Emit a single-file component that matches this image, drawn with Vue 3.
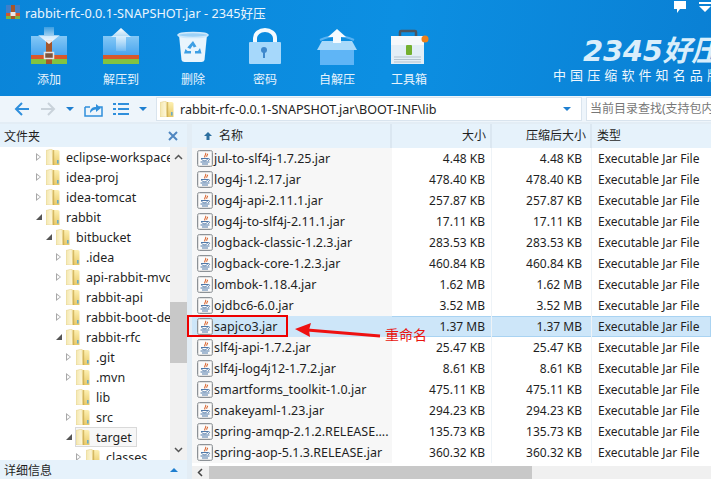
<script setup>
const tools = [
  { label: '添加', kind: 'add' },
  { label: '解压到', kind: 'extract' },
  { label: '删除', kind: 'bin' },
  { label: '密码', kind: 'lock' },
  { label: '自解压', kind: 'box' },
  { label: '工具箱', kind: 'kit' }
]
const tree = [
  { name: 'eclipse-workspace', lvl: 0, ex: 'c' },
  { name: 'idea-proj', lvl: 0, ex: 'c' },
  { name: 'idea-tomcat', lvl: 0, ex: 'c' },
  { name: 'rabbit', lvl: 0, ex: 'o' },
  { name: 'bitbucket', lvl: 1, ex: 'o' },
  { name: '.idea', lvl: 2, ex: 'c' },
  { name: 'api-rabbit-mvc', lvl: 2, ex: 'c' },
  { name: 'rabbit-api', lvl: 2, ex: 'c' },
  { name: 'rabbit-boot-demo', lvl: 2, ex: 'c' },
  { name: 'rabbit-rfc', lvl: 2, ex: 'o' },
  { name: '.git', lvl: 3, ex: 'c' },
  { name: '.mvn', lvl: 3, ex: 'c' },
  { name: 'lib', lvl: 3, ex: '' },
  { name: 'src', lvl: 3, ex: 'c' },
  { name: 'target', lvl: 3, ex: 'o', sel: true },
  { name: 'classes', lvl: 4, ex: 'c' }
]
const files = [
  ['jul-to-slf4j-1.7.25.jar', '4.48 KB', '4.48 KB'],
  ['log4j-1.2.17.jar', '478.40 KB', '478.40 KB'],
  ['log4j-api-2.11.1.jar', '257.87 KB', '257.87 KB'],
  ['log4j-to-slf4j-2.11.1.jar', '17.11 KB', '17.11 KB'],
  ['logback-classic-1.2.3.jar', '283.53 KB', '283.53 KB'],
  ['logback-core-1.2.3.jar', '460.84 KB', '460.84 KB'],
  ['lombok-1.18.4.jar', '1.62 MB', '1.62 MB'],
  ['ojdbc6-6.0.jar', '3.52 MB', '3.52 MB'],
  ['sapjco3.jar', '1.37 MB', '1.37 MB'],
  ['slf4j-api-1.7.2.jar', '25.47 KB', '25.47 KB'],
  ['slf4j-log4j12-1.7.2.jar', '8.61 KB', '8.61 KB'],
  ['smartforms_toolkit-1.0.jar', '475.11 KB', '475.11 KB'],
  ['snakeyaml-1.23.jar', '294.23 KB', '294.23 KB'],
  ['spring-amqp-2.1.2.RELEASE....', '135.73 KB', '135.73 KB'],
  ['spring-aop-5.1.3.RELEASE.jar', '360.32 KB', '360.32 KB']
]
</script>

<template>
  <div class="win">
    <svg width="0" height="0" class="defs">
      <defs>
        <linearGradient id="fg" x1="0" y1="0" x2="0" y2="1">
          <stop offset="0" stop-color="#fdf0b2" />
          <stop offset="1" stop-color="#e8c968" />
        </linearGradient>
        <linearGradient id="fl" x1="0" y1="0" x2="1" y2="0">
          <stop offset="0" stop-color="#f3e6ae" />
          <stop offset="1" stop-color="#fff9df" />
        </linearGradient>
        <linearGradient id="boxg" x1="0" y1="0" x2="0" y2="1">
          <stop offset="0" stop-color="#84c8f6" />
          <stop offset="1" stop-color="#4aa5ee" />
        </linearGradient>
        <linearGradient id="arw" x1="0" y1="0" x2="0" y2="1">
          <stop offset="0" stop-color="#ffffff" />
          <stop offset="1" stop-color="#ffffff" stop-opacity=".15" />
        </linearGradient>
        <linearGradient id="arwd" x1="0" y1="0" x2="0" y2="1">
          <stop offset="0" stop-color="#ffffff" stop-opacity=".2" />
          <stop offset="1" stop-color="#ffffff" />
        </linearGradient>
        <symbol id="fld" viewBox="0 0 14 16">
          <path d="M6 1h6l1.500 1v14H6z" fill="url(#fg)" />
          <path d="M0 1.500L6 0l.8 16H0z" fill="url(#fl)" stroke="#e2cd85" stroke-width=".5" />
          <path d="M6.800 1h1.400v15H6.800z" fill="#c9a94f" opacity=".75" />
          <rect x="11.200" y="11" width="1.300" height="3.500" fill="#4da3d8" />
        </symbol>
        <symbol id="jar" viewBox="0 0 16 17">
          <rect x=".5" y=".5" width="15" height="16" rx="2" fill="#f1f1f1" stroke="#8d9297" />
          <rect x="1.500" y="1.500" width="13" height="14" rx="1" fill="#fbfbfb" stroke="#d4d4d4" stroke-width=".6" />
          <path d="M8.500 3c1.500 1.500-2 2.500-.5 4.500M10.500 3.800c.6 1-1.300 1.500-.7 3" fill="none" stroke="#d9622b" stroke-width="1.100" />
          <path d="M4 8.500h7.500c1.500 0 1.500 1.800-.5 2M4.500 8.500c0 1.500 1.500 2.300 3 2.300s3-.8 3-2.300" fill="none" stroke="#4f78a8" stroke-width="1" />
          <path d="M3.500 12h9M5 14h6" stroke="#4f78a8" stroke-width="1" />
        </symbol>
      </defs>
    </svg>

    <header class="top">
      <div class="title">
        <svg width="16" height="16" viewBox="0 0 16 16">
          <path d="M1 1h14v8H1z" fill="#3f7fc9" />
          <path d="M1 9h14v3H1z" fill="#d4562b" />
          <path d="M1 12h14v3H1z" fill="#7cb342" />
          <path d="M6 1h4v14H6z" fill="#a5562a" />
          <rect x="5.500" y="8" width="5" height="4" fill="#e8e8e8" />
        </svg>
        <span>rabbit-rfc-0.0.1-SNAPSHOT.jar - 2345好压</span>
      </div>
      <div class="toolrow">
        <div v-for="t in tools" :key="t.kind" class="tool">
          <svg width="40" height="40" viewBox="0 0 40 40">
            <template v-if="t.kind === 'add'">
              <path d="M2 10h36v19H2z" fill="url(#boxg)" />
              <path d="M2 29h36v4H2z" fill="#d9582a" />
              <path d="M2 33h36v5H2z" fill="#82c341" />
              <path d="M17 14h6v24h-6z" fill="#a5562a" />
              <path d="M15 1h10v8h6L20 18 9 9h6z" fill="url(#arwd)" />
              <rect x="15.500" y="26.500" width="9" height="6" fill="#7b5540" stroke="#e6e6e6" stroke-width="1.500" />
            </template>
            <template v-else-if="t.kind === 'extract'">
              <path d="M2 10h36v19H2z" fill="url(#boxg)" />
              <path d="M2 29h36v4H2z" fill="#d9582a" />
              <path d="M2 33h36v5H2z" fill="#82c341" />
              <path d="M20 2l10 9h-5v14H15V11h-5z" fill="url(#arw)" />
            </template>
            <template v-else-if="t.kind === 'bin'">
              <path d="M6 9h28l-2.500 25q-.5 2-3 2h-17q-2.500 0-3-2z" fill="#e9f5fd" />
              <ellipse cx="20" cy="9" rx="15" ry="2.600" fill="#9dd2f7" stroke="#cfe9fb" stroke-width="1.500" />
              <path d="M20 15l3.500 5.500-2.800 1-1-2-2.400 3.500-3-1.500zM27 22l1.500 5.500H22V25h3zM12.500 23l-1.500 4.500h7V25h-3.500z" fill="#3e9fe4" />
            </template>
            <template v-else-if="t.kind === 'lock'">
              <path d="M10 17v-5a10 8 0 0 1 20 0v5" fill="none" stroke="#f4fafe" stroke-width="4" />
              <rect x="4" y="16" width="32" height="22" rx="1" fill="#a6d8fb" />
              <circle cx="19" cy="24" r="3" fill="#3f88cc" />
              <rect x="18" y="25" width="2" height="7" fill="#3f88cc" />
            </template>
            <template v-else-if="t.kind === 'box'">
              <path d="M3 14q17-8 34 0" fill="none" stroke="#58b2f2" stroke-width="2" />
              <path d="M3 24h34v15H3z" fill="#5fb5f6" />
              <path d="M5 15h30l5 9H0z" fill="#a8d9fa" />
              <path d="M20 3l9 8h-5v6h-8v-6h-5z" fill="#f5fbff" />
            </template>
            <template v-else>
              <path d="M11 10V6q0-1 1-1h14q1 0 1 1v4" fill="none" stroke="#4a5560" stroke-width="2.500" />
              <path d="M2 10h33v28H2z" fill="#e3eef6" />
              <path d="M2 10h33v9H2z" fill="#f5f8fb" />
              <path d="M5 31h27M5 33.500h27M5 36h27" stroke="#b3c3cf" stroke-width="1" />
              <rect x="17" y="19" width="6" height="10" rx="1" fill="#74b030" />
              <circle cx="36" cy="13" r="3.500" fill="#f08019" />
            </template>
          </svg>
          <span>{{ t.label }}</span>
        </div>
      </div>
      <div class="brand">
        <div class="winicons">
          <svg width="14" height="14" viewBox="0 0 14 14"><path d="M1 1h12v8H7l-3 4V9H1z" fill="#fff" /></svg>
          <svg width="14" height="14" viewBox="0 0 14 14"><path d="M1 2h12v2H1zM1 6h12l-6 6z" fill="#fff" /></svg>
        </div>
        <div class="logo">2345好压</div>
        <div class="slogan">中国压缩软件知名品牌</div>
      </div>
    </header>

    <div class="addr">
      <div class="nav">
        <svg width="16" height="16" viewBox="0 0 16 16"><path d="M15 8H2M8 2L2 8l6 6" fill="none" stroke="#2f8fdc" stroke-width="2" /></svg>
        <svg width="16" height="16" viewBox="0 0 16 16"><path d="M1 8h13M8 2l6 6-6 6" fill="none" stroke="#c9d2da" stroke-width="2" /></svg>
        <i class="caret"></i>
        <svg width="19" height="16" viewBox="0 0 19 16"><path d="M1 6h5M1 6v9h17V6h-3" fill="none" stroke="#2f8fdc" stroke-width="1.500" /><path d="M6 12c0-5 3-6 6-6V3l5 4-5 4V8.500c-2 0-4 1-6 3.500z" fill="#2f8fdc" /></svg>
        <svg width="16" height="14" viewBox="0 0 16 14"><path d="M0 2h3M5 2h11M0 7h3M5 7h11M0 12h3M5 12h11" stroke="#2f8fdc" stroke-width="2" /></svg>
        <i class="caret"></i>
      </div>
      <div class="path">
        <svg class="folder" width="14" height="16" viewBox="0 0 14 16"><use href="#fld" /></svg>
        <span class="ptext">rabbit-rfc-0.0.1-SNAPSHOT.jar\BOOT-INF\lib</span>
        <i class="caret pcaret"></i>
      </div>
      <div class="search">当前目录查找(支持包内查找)</div>
    </div>

    <div class="main">
      <aside class="side">
        <div class="shead">
          <span>文件夹</span>
          <svg width="10" height="10" viewBox="0 0 10 10"><path d="M1 1l8 8M9 1l-8 8" stroke="#4f86c0" stroke-width="2" /></svg>
        </div>
        <div class="treewrap">
          <div class="tree">
            <div v-for="n in tree" :key="n.name" class="tnode" :class="'lvl' + n.lvl">
              <i class="exp" :class="n.ex"></i>
              <div class="tlabel" :class="{ tsel: n.sel }">
                <svg class="folder" width="14" height="16" viewBox="0 0 14 16"><use href="#fld" /></svg>
                <span>{{ n.name }}</span>
              </div>
            </div>
          </div>
          <div class="vbar">
            <svg width="9" height="6" viewBox="0 0 9 6"><path d="M1 5l3.500-3.500L8 5" fill="none" stroke="#555" stroke-width="1.500" /></svg>
            <div class="vtrack"><div class="vthumb"></div></div>
            <svg width="9" height="6" viewBox="0 0 9 6"><path d="M1 1l3.500 3.500L8 1" fill="none" stroke="#555" stroke-width="1.500" /></svg>
          </div>
        </div>
        <div class="sfoot"><span>详细信息</span><i class="upcaret"></i></div>
      </aside>

      <section class="list">
        <div class="lhead">
          <div class="c1 hname">
            <svg width="8" height="8" viewBox="0 0 8 8"><path d="M4 0l4 4H5.500v4h-3V4H0z" fill="#2c6f9f" /></svg>
            名称
          </div>
          <div class="c2">大小</div>
          <div class="c3">压缩后大小</div>
          <div class="c4">类型</div>
        </div>
        <div class="rows">
          <div v-for="f in files" :key="f[0]" class="row" :class="{ picked: f[0] === 'sapjco3.jar' }">
            <div class="c1 fname">
              <svg width="16" height="17" viewBox="0 0 16 17"><use href="#jar" /></svg>
              <span>{{ f[0] }}</span>
            </div>
            <div class="c2">{{ f[1] }}</div>
            <div class="c3">{{ f[2] }}</div>
            <div class="c4">Executable Jar File</div>
          </div>
        </div>
        <div class="hbar">
          <svg width="6" height="9" viewBox="0 0 6 9"><path d="M5 1L1.500 4.500 5 8" fill="none" stroke="#444" stroke-width="1.500" /></svg>
          <div class="hthumb"></div>
        </div>
      </section>
    </div>

    <div class="redbox"></div>
    <svg class="redarrow" width="86" height="22" viewBox="0 0 86 22">
      <path d="M12 8L85 14" stroke="#ee1111" stroke-width="2.800" />
      <path d="M0 7L16 1l-2 7 1 7z" fill="#ee1111" />
    </svg>
    <div class="rename">重命名</div>
  </div>
</template>

<style scoped>
.win {
  position: relative;
  width: 711px;
  height: 479px;
  overflow: hidden;
  background: #fff;
  font-family: "Noto Sans", "Noto Sans CJK SC", sans-serif;
  font-size: 12px;
  color: #1f1f1f;
}
.top {
  position: relative;
  height: 96px;
  box-sizing: border-box;
  background: linear-gradient(100deg, #0a85d9 0%, #0c8fe2 55%, #0a80d4 100%);
  color: #fff;
}
.title {
  display: flex;
  align-items: center;
  gap: 4px;
  height: 24px;
  padding-left: 5px;
  font-size: 12.700px;
  color: #eaf5fd;
}
.toolrow {
  display: flex;
  padding-left: 13px;
}
.tool {
  display: flex;
  flex-direction: column;
  align-items: center;
  width: 72px;
  gap: 6px;
  margin-top: 2px;
}
.tool span {
  font-size: 12px;
  line-height: 16px;
  color: #e8f4fd;
}
.brand {
  position: absolute;
  right: 0;
  top: 0;
  width: 158px;
  height: 96px;
  overflow: hidden;
}
.winicons {
  position: absolute;
  right: -1px;
  top: 0;
  display: flex;
  gap: 11px;
}
.logo {
  position: absolute;
  left: 30px;
  top: 34px;
  white-space: nowrap;
  font-family: "DejaVu Sans", "Noto Sans CJK SC", sans-serif;
  font-weight: 700;
  font-style: italic;
  font-size: 29px;
  line-height: 34px;
  letter-spacing: -0.300px;
  color: #d9eefb;
}
.slogan {
  position: absolute;
  left: 0;
  top: 66px;
  white-space: nowrap;
  font-family: "Noto Sans CJK SC", sans-serif;
  font-size: 13px;
  line-height: 18px;
  letter-spacing: 4.100px;
  color: #eef7fd;
}
.addr {
  display: flex;
  align-items: center;
  gap: 4px;
  height: 26px;
  background: #eef5fb;
  box-sizing: border-box;
}
.nav {
  display: flex;
  align-items: center;
  width: 152px;
  padding-left: 14px;
  box-sizing: border-box;
  gap: 10px;
}
.caret {
  width: 0;
  height: 0;
  border-left: 4px solid transparent;
  border-right: 4px solid transparent;
  border-top: 4px solid #1e7fd0;
}
.path {
  flex: 0 0 426px;
  height: 24px;
  box-sizing: border-box;
  display: flex;
  align-items: center;
  background: #fff;
  border: 1px solid #d9e4ee;
  padding-left: 3px;
}
.ptext {
  margin-left: 6px;
  font-size: 12.600px;
  white-space: nowrap;
}
.pcaret { margin-left: auto; margin-right: 10px; }
.search {
  flex: 1;
  height: 24px;
  box-sizing: border-box;
  background: #fff;
  border: 1px solid #d9e4ee;
  border-right: 0;
  padding-left: 3px;
  line-height: 22px;
  font-size: 12px;
  color: #777;
  white-space: nowrap;
  overflow: hidden;
}
.defs { position: absolute; }
.folder { flex: none; }
.main {
  display: flex;
  height: 357px;
  background: #e3edf5;
}
.side {
  width: 187px;
  display: flex;
  flex-direction: column;
  margin-top: 2px;
  background: #fff;
}
.shead {
  height: 23px;
  background: #e6f2fb;
  display: flex;
  align-items: center;
  justify-content: space-between;
  padding: 0 9px 0 4px;
  font-size: 12px;
}
.treewrap {
  display: flex;
  height: 313px;
  overflow: hidden;
}
.tree {
  width: 170px;
  overflow: hidden;
  flex: none;
}
.tnode {
  display: flex;
  align-items: center;
  height: 20px;
  white-space: nowrap;
}
.tnode.lvl0 { padding-left: 36px; }
.tnode.lvl1 { padding-left: 46px; }
.tnode.lvl2 { padding-left: 56px; }
.tnode.lvl3 { padding-left: 66px; }
.tnode.lvl4 { padding-left: 76px; }
.exp {
  flex: none;
  width: 10px;
  height: 10px;
  display: block;
  position: relative;
}
.exp.c::after {
  content: "";
  position: absolute;
  left: 0;
  top: 1px;
  border-left: 5px solid #a8a8a8;
  border-top: 4px solid transparent;
  border-bottom: 4px solid transparent;
}
.exp.c::before {
  content: "";
  position: absolute;
  left: 1px;
  top: 3px;
  z-index: 1;
  border-left: 3px solid #fff;
  border-top: 2px solid transparent;
  border-bottom: 2px solid transparent;
}
.exp.o::after {
  content: "";
  position: absolute;
  left: 0;
  top: 2px;
  border-bottom: 6px solid #555;
  border-left: 6px solid transparent;
}
.tlabel {
  display: flex;
  align-items: center;
  gap: 6px;
  height: 20px;
  box-sizing: border-box;
  padding: 0 4px 0 0;
  font-size: 12.500px;
}
.tsel {
  border: 1px solid #d9d9d9;
  background: #f7f7f7;
  margin-left: -1px;
}
.vbar {
  width: 17px;
  background: #f1f1f1;
  display: flex;
  flex-direction: column;
  align-items: center;
  justify-content: space-between;
  padding: 7px 0;
  box-sizing: border-box;
}
.vtrack {
  flex: 1;
  align-self: stretch;
  padding-top: 142px;
}
.vthumb {
  height: 61px;
  background: #c8c8c8;
}
.sfoot {
  height: 19px;
  background: #e6f2fb;
  display: flex;
  align-items: center;
  justify-content: space-between;
  padding: 0 9px 0 4px;
}
.upcaret {
  border-left: 4px solid transparent;
  border-right: 4px solid transparent;
  border-bottom: 4px solid #1e7fd0;
}
.list {
  flex: 1;
  margin-top: 2px;
  margin-left: 5px;
  min-width: 0;
  background: #fff;
  display: flex;
  flex-direction: column;
}
.lhead {
  display: flex;
  height: 24px;
  background: #e6f2fb;
  line-height: 24px;
}
.lhead > div { border-right: 2px solid #dbe7f1; box-sizing: border-box; }
.lhead .c2, .lhead .c3 { padding-right: 4px; }
.lhead .c4 { border: 0; padding-left: 5px; }
.c1 { flex: 0 0 200px; }
.c2 { flex: 0 0 100px; text-align: right; padding-right: 6px; box-sizing: border-box; }
.c3 { flex: 0 0 100px; text-align: right; padding-right: 9px; box-sizing: border-box; }
.c4 { flex: 1; padding-left: 6px; white-space: nowrap; overflow: hidden; }
.hname { padding-left: 12px; display: flex; align-items: center; gap: 7px; }
.rows {
  height: 318px;
  overflow: hidden;
}
.row {
  display: flex;
  height: 21px;
  line-height: 21px;
  box-sizing: border-box;
  white-space: nowrap;
  font-size: 12px;
}
.row .c1 { background: #f7f7f7; }
.row .c2 { border-right: 1px solid #eef3f7; }
.row .c3 { border-right: 1px solid #eef3f7; }
.row.picked { background: #cde6f9; box-shadow: inset 0 0 0 1px #a9d3f2; }
.row.picked .c1 { background: #cde6f9; }
.fname {
  display: flex;
  align-items: center;
  gap: 1px;
  padding-left: 5px;
  box-sizing: border-box;
  font-size: 12.500px;
}
.hbar {
  flex: 1;
  display: flex;
  align-items: center;
  background: #f0f0f0;
  padding-left: 5px;
}
.hthumb {
  align-self: stretch;
  margin-left: 6px;
  width: 323px;
  background: #c8c8c8;
}
.redbox {
  position: absolute;
  left: 187px;
  top: 315px;
  width: 101px;
  height: 22px;
  border: 2px solid #ee0000;
  box-sizing: border-box;
  pointer-events: none;
}
.redarrow {
  position: absolute;
  left: 295px;
  top: 322px;
}
.rename {
  position: absolute;
  left: 385px;
  top: 324px;
  font-size: 14px;
  line-height: 20px;
  color: #e8140e;
  font-family: "Noto Sans CJK SC", sans-serif;
}
</style>
